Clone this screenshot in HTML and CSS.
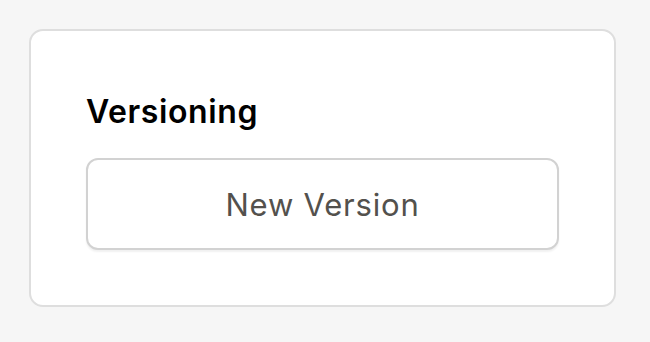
FILE: index.html
```html
<!DOCTYPE html>
<html lang="en">
<head>
    <meta charset="UTF-8">
    <meta name="viewport" content="width=device-width, initial-scale=1.0">
    <title>Versioning</title>
    <link rel="stylesheet" href="styles.css">
</head>
<body>
    <main class="page">
        <section class="card">
            <h2 class="card-title">Versioning</h2>
            <button class="btn" type="button">New Version</button>
        </section>
    </main>
</body>
</html>
```

FILE: styles.css
```css
* {
    margin: 0;
    padding: 0;
    box-sizing: border-box;
}

body {
    font-family: Inter, Roboto, sans-serif;
    background-color: #f6f6f6;
    color: #000;
}

.page {
    padding: 29px 34px 0 29px;
}

/* card */
.card {
    background: #fff;
    border: 2px solid #dedede;
    border-radius: 14px;
    height: 278px;
    padding: 61px 55px 0 55px;
    display: flex;
    flex-direction: column;
}

.card-title {
    font-size: 32px;
    font-weight: 600;
    letter-spacing: 0.6px;
    line-height: 40px;
    margin-bottom: 26px;
}

.btn {
    height: 92px;
    width: 100%;
    background: #fff;
    border: 2px solid #d2d2d2;
    border-radius: 12px;
    box-shadow: 0 2px 2px rgba(0, 0, 0, 0.06);
    font-family: Inter, Roboto, sans-serif;
    font-size: 31px;
    letter-spacing: 0.8px;
    color: #53514d;
    cursor: pointer;
}
```
